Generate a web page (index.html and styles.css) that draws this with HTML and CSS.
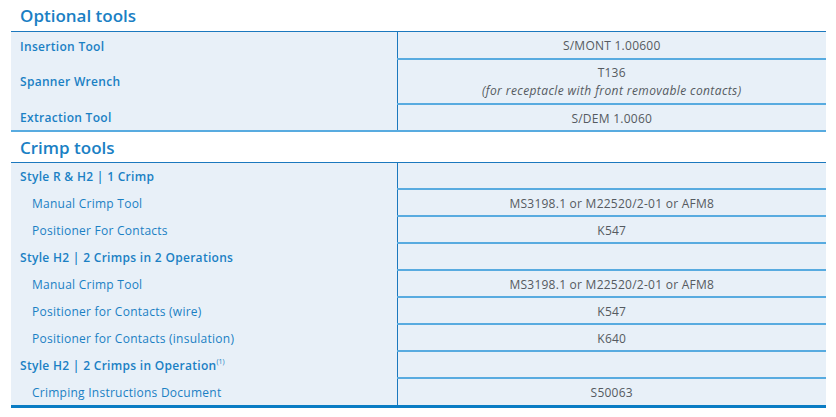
FILE: index.html
```html
<!DOCTYPE html>
<html>
<head>
<meta charset="utf-8">
<link rel="stylesheet" href="styles.css">
</head>
<body>
<div class="page">
  <h2 class="section-title">Optional tools</h2>
  <table class="spec">
    <tr><td class="label main">Insertion Tool</td><td class="value">S/MONT 1.00600</td></tr>
    <tr class="tall"><td class="label main">Spanner Wrench</td><td class="value">T136<br><i>(for receptacle with front removable contacts)</i></td></tr>
    <tr class="last light"><td class="label main">Extraction Tool</td><td class="value">S/DEM 1.0060</td></tr>
  </table>
  <h2 class="section-title second">Crimp tools</h2>
  <table class="spec">
    <tr><td class="label main">Style R &amp; H2 | 1 Crimp</td><td class="value"></td></tr>
    <tr><td class="label sub">Manual Crimp Tool</td><td class="value">MS3198.1 or M22520/2-01 or AFM8</td></tr>
    <tr><td class="label sub">Positioner For Contacts</td><td class="value">K547</td></tr>
    <tr><td class="label main">Style H2 | 2 Crimps in 2 Operations</td><td class="value"></td></tr>
    <tr><td class="label sub">Manual Crimp Tool</td><td class="value">MS3198.1 or M22520/2-01 or AFM8</td></tr>
    <tr><td class="label sub">Positioner for Contacts (wire)</td><td class="value">K547</td></tr>
    <tr><td class="label sub">Positioner for Contacts (insulation)</td><td class="value">K640</td></tr>
    <tr><td class="label main">Style H2 | 2 Crimps in Operation<sup>(1)</sup></td><td class="value"></td></tr>
    <tr class="last dark"><td class="label sub">Crimping Instructions Document</td><td class="value">S50063</td></tr>
  </table>
</div>
</body>
</html>
```
FILE: styles.css
```css
* { box-sizing: border-box; }
html, body { margin: 0; padding: 0; background: #ffffff; }
body { font-family: "Open Sans", Lato, sans-serif; }
.page { padding: 0 10px 0 11px; width: 836px; }
.section-title {
  margin: 0;
  height: 31px;
  padding: 5px 0 0 9px;
  font-family: "Open Sans", sans-serif;
  font-size: 17px;
  line-height: 22px;
  font-weight: 600;
  color: #1a80c4;
}
.section-title.second { height: 30px; padding-top: 5px; }
.spec {
  width: 815px;
  border-collapse: collapse;
  background: #e8f0f8;
  border-top: 1px solid #1b78be;
}
.spec td {
  height: 27px;
  padding: 2px 0 0 0;
  font-size: 12px;
  line-height: 17px;
  letter-spacing: 0.25px;
  vertical-align: middle;
}
.spec .label {
  width: 386px;
  border-right: 1px solid #1b78be;
  color: #1a80c4;
}
.spec .label.main { font-weight: 600; padding-left: 9px; letter-spacing: 0.3px; }
.spec .label.sub { padding-left: 21px; }
.spec .value {
  text-align: center;
  color: #555a60;
  border-bottom: 2px solid #58abe0;
}
.spec .value i { letter-spacing: 0.4px; }
.spec tr.tall td { height: 45px; line-height: 18px; }
.spec tr.last.light td { border-bottom: 2px solid #58abe0; height: 27px; }
.spec tr.last.dark td { border-bottom: 3px solid #0a7cc4; height: 28px; }
sup { font-size: 7px; line-height: 0; vertical-align: 6px; font-weight: 400; letter-spacing: 0; }
```
